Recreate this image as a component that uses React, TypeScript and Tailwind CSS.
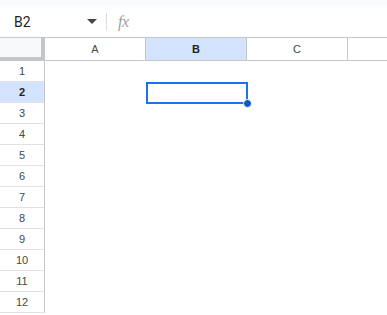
const columns = ["A", "B", "C", ""];
const rows = Array.from({ length: 12 }, (_, i) => i + 1);

const selCol = "B";
const selRow = 2;

export default function App() {
  return (
    <div className="w-[387px] h-[315px] overflow-hidden bg-white font-['Roboto','Liberation_Sans',sans-serif] text-[#1f1f1f]">
      <div className="h-[6px] bg-[#f9fbfd]" />
      {/* formula bar */}
      <div className="h-[31px] flex items-center">
        <div className="w-[106px] flex items-center pl-[14px] pr-[9px] justify-between">
          <span className="text-[14px] leading-none">B2</span>
          <svg width="10" height="6" viewBox="0 0 10 6" className="mt-[1px]">
            <path d="M0 0h10L5 5z" fill="#444746" />
          </svg>
        </div>
        <div className="w-px h-[18px] bg-[#dadce0]" />
        <span className="ml-[11px] text-[16px] italic text-[#a0a0a0] font-['Liberation_Serif',serif] tracking-[-0.5px]">
          fx
        </span>
      </div>
      {/* grid */}
      <div className="relative border-t border-[#c4c7c5]">
        <div className="flex h-[23px]">
          <div className="w-[45px] shrink-0 bg-[#f8f9fa] border-r-[4px] border-b-[4px] border-[#c4c7c5]" />
          {columns.map((c, i) => (
            <div
              key={i}
              className={`w-[101px] shrink-0 flex items-center justify-center text-[11px] border-r border-b border-[#c4c7c5] font-['Liberation_Sans',sans-serif] ${
                c === selCol ? "bg-[#d3e3fd] font-bold text-[#1f1f1f]" : "text-[#444746]"
              }`}
            >
              {c}
            </div>
          ))}
        </div>
        {rows.map((r) => (
          <div key={r} className="flex h-[21px]">
            <div
              className={`w-[45px] shrink-0 flex items-center justify-center text-[11px] border-r border-b border-[#e1e1e1] font-['Liberation_Sans',sans-serif] ${
                r === selRow ? "bg-[#d3e3fd] font-bold text-[#1f1f1f]" : "text-[#444746]"
              }`}
              style={{ borderRightColor: "#c4c7c5" }}
            >
              {r}
            </div>
            <div className="flex-1" />
          </div>
        ))}
        {/* selection */}
        <div className="absolute left-[146px] top-[44px] w-[102px] h-[22px] border-2 border-[#1a73e8]" />
        <div className="absolute left-[243px] top-[61px] w-[9px] h-[9px] rounded-full bg-[#0b57d0] border border-white" />
      </div>
    </div>
  );
}
